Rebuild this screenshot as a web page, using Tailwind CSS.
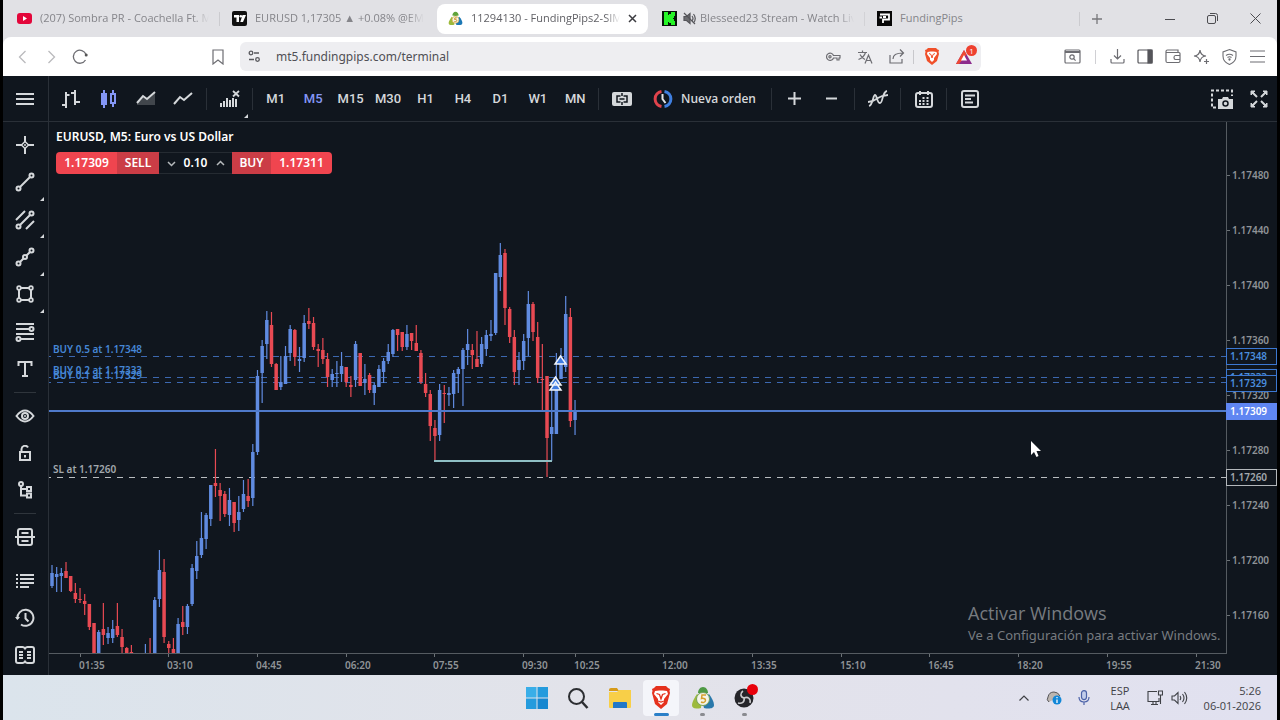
<!DOCTYPE html>
<html lang="es">
<head>
    <meta charset="UTF-8">
    <meta name="viewport" content="width=device-width, initial-scale=1.0">
    <title>11294130 - FundingPips2-SIM</title>
    <script src="https://cdn.jsdelivr.net/npm/@tailwindcss/browser@4"></script>
</head>

<body class="flex flex-col h-screen overflow-hidden bg-black px-[3px] font-['Open_Sans','Noto_Sans',sans-serif]">

    <!-- Tab strip -->
    <div class="flex h-[37px] shrink-0 items-center bg-[#e1e1e5] text-xs text-[#85858a]">
        <nav class="flex flex-1 items-center pl-px" aria-label="Tabs">
            <a href="#" class="flex h-[30px] max-w-[215px] flex-1 items-center gap-2 pl-[13px] pr-[10px] min-w-0">
                <svg class="w-[15px] h-[15px] shrink-0" viewBox="0 0 15 15"><rect y="2" width="15" height="11" rx="3" fill="#e3063a"/><path d="M6 5l4 2.500-4 2.500z" fill="#fff"/></svg>
                <span class="flex-1 overflow-hidden whitespace-nowrap text-[11px] mask-r-from-90%">(207) Sombra PR - Coachella Ft. M</span>
            </a>
            <a href="#" class="flex h-[14px] max-w-[215px] flex-1 items-center gap-2 pl-3 pr-[10px] min-w-0 border-l border-[#cbcbcf]">
                <svg class="w-[15px] h-[15px] shrink-0" viewBox="0 0 15 15"><rect width="15" height="15" rx="2" fill="#111"/><path d="M2 4h5v7H4.500V6.500H2zM10.500 4H14l-3 7H8.300z" fill="#fff"/><circle cx="8.800" cy="5.300" r="1.300" fill="#fff"/></svg>
                <span class="flex-1 overflow-hidden whitespace-nowrap text-[11px] mask-r-from-90%">EURUSD 1,17305 ▲ +0.08% @EMI</span>
            </a>
            <a href="#" aria-current="page" class="flex h-[30px] max-w-[215px] flex-1 min-w-0 pl-[3px] pr-px">
                <span class="flex flex-1 min-w-0 items-center gap-2 rounded-lg bg-white pl-[11px] pr-[11px] text-[#616166]">
                    <svg class="w-[15px] h-[15px] shrink-0" viewBox="0 0 24 24"><path d="M12 1c3 0 5 3 5 6l-5 1-5-1c0-3 2-6 5-6z" fill="#5fa33a"/><path d="M6 9l5 4-1 9c-4 1-9 1-9-3 0-3 3-7 5-10z" fill="#9db93a"/><path d="M18 9c3 3 5 7 5 10 0 4-6 4-10 3l-2-8z" fill="#1c78b5"/><circle cx="12" cy="14" r="5.500" fill="#f7f4e6" stroke="#d0a23c"/><path d="M14 11h-3l-.5 2.500c3 0 4 .5 3.500 2.500-.5 1-2 1.500-4 1" fill="none" stroke="#c98b1e" stroke-width="1.500"/></svg>
                    <span class="flex-1 overflow-hidden whitespace-nowrap text-[11px] mask-r-from-90%">11294130 - FundingPips2-SIM</span>
                    <svg class="w-[9px] h-[9px] shrink-0" viewBox="0 0 9 9" stroke="#3c3c40" stroke-width="1.500"><path d="M1 1l7 7M8 1L1 8"/></svg>
                </span>
            </a>
            <a href="#" class="flex h-[30px] max-w-[215px] flex-1 items-center pl-[13px] pr-[10px] min-w-0">
                <svg class="w-[15px] h-[15px] shrink-0" viewBox="0 0 15 15"><rect width="15" height="15" fill="#08140a"/><path d="M2 1h4v3h1V3h2V1h4v4h-1v2h-1v1h1v2h1v4H9v-2H7v-1H6v3H2z" fill="#27f528"/></svg>
                <svg class="ml-[6px] mr-1 w-[13px] h-[13px] shrink-0" viewBox="0 0 13 13" fill="none" stroke="#55555a" stroke-width="1.200"><path d="M1 4.500h2.500L7 1.500v10L3.500 8.500H1z" fill="#6c6c70"/><path d="M9 4q2 2.500 0 5M10.500 2q3.500 4.500 0 9M1 1l11 11"/></svg>
                <span class="flex-1 overflow-hidden whitespace-nowrap text-[11px] mask-r-from-90%">Blesseed23 Stream - Watch Liv</span>
            </a>
            <a href="#" class="flex h-[14px] max-w-[215px] flex-1 items-center gap-2 pl-3 min-w-0 border-l border-[#d2d2d6]">
                <svg class="w-[15px] h-[15px] shrink-0" viewBox="0 0 15 15"><rect width="15" height="15" fill="#080808"/><path d="M3 3.500h9v5H6V12M6 6h3M2.500 6.500H5" fill="none" stroke="#fff" stroke-width="1.800"/></svg>
                <span class="whitespace-nowrap text-[11px]">FundingPips</span>
            </a>
            <button aria-label="Nueva pestaña" class="flex h-[14px] w-[35px] items-center justify-center border-l border-[#cbcbcf]">
                <svg class="w-[10px] h-[10px]" viewBox="0 0 10 10" stroke="#77777b" stroke-width="1.300"><path d="M5 0v10M0 5h10"/></svg>
            </button>
        </nav>
        <div class="flex items-center">
            <button aria-label="Minimizar" class="flex w-[43px] justify-center"><svg class="w-[10px] h-[10px]" viewBox="0 0 10 10" stroke="#4c4c50"><path d="M0 5.500h10"/></svg></button>
            <button aria-label="Restaurar" class="flex w-[43px] justify-center"><svg class="w-[11px] h-[11px]" viewBox="0 0 11 11" fill="none" stroke="#4c4c50"><rect x=".5" y="2.500" width="8" height="8" rx="1.500"/><path d="M3 .500h5.500a2 2 0 0 1 2 2V8"/></svg></button>
            <button aria-label="Cerrar" class="flex w-[43px] justify-center"><svg class="w-[11px] h-[11px]" viewBox="0 0 11 11" stroke="#4c4c50"><path d="M.5.500l10 10M10.500.500l-10 10"/></svg></button>
        </div>
    </div>

    <!-- Address bar -->
    <div class="shrink-0 bg-[#e1e1e5]">
        <div class="flex h-[39px] items-center rounded-t-lg bg-white text-[#6d6d72]">
            <div class="flex w-[237px] items-center">
                <button aria-label="Atrás" class="flex w-[40px] justify-center"><svg class="w-[14px] h-[14px]" viewBox="0 0 14 14" fill="none" stroke="#bababd" stroke-width="1.300"><path d="M9.500 1l-6 6 6 6"/></svg></button>
                <button aria-label="Adelante" class="flex w-[16px] justify-center"><svg class="w-[14px] h-[14px]" viewBox="0 0 14 14" fill="none" stroke="#bababd" stroke-width="1.300"><path d="M4.500 1l6 6-6 6"/></svg></button>
                <button aria-label="Recargar" class="flex w-[41px] justify-center"><svg class="w-4 h-4" viewBox="0 0 16 16" fill="none" stroke="#6d6d72" stroke-width="1.300"><path d="M13.500 11A6.500 6.500 0 1 1 14 5.500"/><circle cx="14.200" cy="6" r="1.500" fill="#555" stroke="none"/></svg></button>
                <span class="flex-1"></span>
                <button aria-label="Marcador" class="flex w-11 justify-center"><svg class="w-[14px] h-4" viewBox="0 0 14 16" fill="none" stroke="currentColor" stroke-width="1.200"><path d="M2 1h10v14l-5-4-5 4z"/></svg></button>
            </div>
            <div class="flex h-[29px] flex-1 items-center rounded-md bg-[#eeeef1] pl-2">
                <svg class="w-[13px] h-[13px]" viewBox="0 0 13 13" fill="none" stroke="#59595e" stroke-width="1.300"><circle cx="3" cy="3" r="1.800"/><path d="M6 3h5M1 9.500h5"/><circle cx="9.500" cy="9.500" r="1.800"/></svg>
                <input aria-label="Dirección" value="mt5.fundingpips.com/terminal" class="ml-[15px] min-w-0 flex-1 bg-transparent font-['Noto_Sans',sans-serif] text-xs text-[#505055] outline-none">
                <button aria-label="Contraseña" class="flex w-8 justify-center"><svg class="w-[15px] h-[10px]" viewBox="0 0 15 10" fill="none" stroke="currentColor" stroke-width="1.200"><path d="M7.500 3.500H14v2.500h-1v2h-2V6H7.500A3.600 3.600 0 1 1 7.500 3.500z"/><circle cx="4" cy="4.800" r="1.100"/></svg></button>
                <button aria-label="Traducir" class="flex w-8 justify-center"><svg class="w-[15px] h-[14px]" viewBox="0 0 15 14" fill="none" stroke="currentColor" stroke-width="1.200"><path d="M0 2.500h9M4.500.500v2M7.500 2.500C6.500 6 3 8.500.5 9.500M2 4.500c1 2 3 4 5 5M7 13.500l3.500-8.500L14 13.500M8.200 10.500h4.700"/></svg></button>
                <button aria-label="Compartir" class="flex w-8 justify-center"><svg class="w-4 h-[15px]" viewBox="0 0 16 15" fill="none" stroke="currentColor" stroke-width="1.200"><path d="M1 6v8h12v-4M4 10c0-4 3-6 10-6M11 .500L14.500 4 11 7.500"/></svg></button>
                <span class="h-[14px] w-px bg-[#c8c8cc]"></span>
                <button aria-label="Brave Shields" class="flex w-9 justify-center"><svg class="w-4 h-[17px]" viewBox="0 0 16 17"><path d="M4 0h8l1.500 1.500L15 2l-.5 2L15 6l-2 7-5 4-5-4-2-7 .5-2L1 2l1.500-.500z" fill="#f0502a"/><path d="M3.500 4l3-.5h3l3 .5.500 2-3 4v2L8 14l-2-2v-2L3 6z" fill="#fff"/><path d="M5 5.500l2 1L8 10l1-3.500 2-1" fill="none" stroke="#f0502a"/></svg></button>
                <button aria-label="Brave Rewards" class="relative flex w-7 justify-center mr-[3px]"><svg class="w-4 h-[14px]" viewBox="0 0 16 14"><path d="M8 0l8 14H0z" fill="#8d2c8d"/><path d="M8 0l2.500 4.500L3 14H0z" fill="#ee4a34"/><path d="M8 5l3 5.500H5z" fill="#fff"/></svg><span class="absolute -top-[5px] left-4 h-[11px] w-[11px] rounded-full bg-[#ee402f] text-center text-[8px] leading-[11px] text-white">1</span></button>
            </div>
            <div class="flex w-[296px] items-center justify-end">
                <button aria-label="Buscar pestañas" class="flex w-[31px] justify-center"><svg class="w-[17px] h-[15px]" viewBox="0 0 17 15" fill="none" stroke="currentColor" stroke-width="1.200"><rect x="1" y="1" width="15" height="13" rx="1"/><path d="M1 3h15" stroke-width="2"/><circle cx="8" cy="8" r="2.200"/><path d="M9.600 9.600l2 2"/></svg></button>
                <span class="mx-[7px] h-[14px] w-px bg-[#d0d0d4]"></span>
                <button aria-label="Descargas" class="flex w-7 justify-center"><svg class="w-[15px] h-[15px]" viewBox="0 0 15 15" fill="none" stroke="currentColor" stroke-width="1.200"><path d="M7.500 0v10M4 6.500L7.500 10 11 6.500M1 10v3q0 1 1 1h11q1 0 1-1v-3"/></svg></button>
                <button aria-label="Barra lateral" class="flex w-7 justify-center"><svg class="w-4 h-[15px]" viewBox="0 0 16 15" fill="none" stroke="#55555a" stroke-width="1.200"><rect x="1" y="1" width="14" height="13" rx="1"/><path d="M11 1h4v13h-4z" fill="#55555a"/></svg></button>
                <button aria-label="Cartera" class="flex w-7 justify-center"><svg class="w-4 h-[15px]" viewBox="0 0 16 15" fill="none" stroke="currentColor" stroke-width="1.200"><path d="M1 4V2.500Q1 1 2.500 1H13v3M1 3.500h13q1 0 1 1V12q0 1.500-1.500 1.500h-11Q1 13.500 1 12z M15 6.500h-4.500q-1.500 0-1.500 2t1.500 2H15"/></svg></button>
                <button aria-label="Leo AI" class="flex w-7 justify-center"><svg class="w-4 h-4" viewBox="0 0 16 16" fill="none" stroke="currentColor" stroke-width="1.200"><path d="M7 1q.5 5.500 6 6-5.500.5-6 6-.5-5.500-6-6 5.500-.5 6-6zM13.500 10v5M11 12.500h5"/></svg></button>
                <button aria-label="VPN" class="flex w-7 justify-center"><svg class="w-[15px] h-4" viewBox="0 0 15 16" fill="none" stroke="currentColor" stroke-width="1.100"><path d="M7.500.600L14 3v4q0 6-6.500 8.500Q1 13 1 7V3zM4 6.500q3.500-2.500 7 0M5.500 8.500q2-1.500 4 0"/><circle cx="7.500" cy="10.500" r=".6"/></svg></button>
                <button aria-label="Menú" class="mr-[6px] flex w-7 justify-center"><svg class="w-[15px] h-[13px]" viewBox="0 0 15 13" stroke="currentColor" stroke-width="1.200"><path d="M0 1h15M0 6.500h15M0 12h15"/></svg></button>
            </div>
        </div>
    </div>

    <!-- Trading terminal -->
    <div class="flex min-h-0 flex-1 flex-col bg-[#10161e] text-[#d5d8db]">
        <header class="flex h-[46px] shrink-0 items-center border-b border-[#2a3038]">
            <button aria-label="Menú principal" class="flex h-full w-[46px] items-center justify-center border-r border-[#2a3038] pr-px">
                <svg class="w-[18px] h-[14px]" viewBox="0 0 18 14" stroke="currentColor" stroke-width="2"><path d="M0 2h18M0 7h18M0 12h18"/></svg>
            </button>
            <div class="ml-[3px] grid w-[150px] grid-cols-4 justify-items-center">
                <button aria-label="Barras"><svg class="w-5 h-5" viewBox="0 0 20 20" fill="none" stroke="currentColor" stroke-width="2"><path d="M5 3v16M5 6h3.500M1 16h4M14 1v15M10 4h4M14 13h5"/></svg></button>
                <button aria-label="Velas"><svg class="w-5 h-5" viewBox="0 0 20 20" fill="none" stroke="#8496f5" stroke-width="2"><path d="M6 1v18M15 1v4M15 14v4"/><rect x="4" y="5" width="4" height="10" fill="#8496f5"/><rect x="13" y="5" width="4" height="9"/></svg></button>
                <button aria-label="Área"><svg class="w-5 h-5" viewBox="0 0 20 20"><path d="M1 14l6-6 4 3 8-7v12H1z" fill="#41464c"/><path d="M1 14l6-7 4 3 8-7" fill="none" stroke="currentColor" stroke-width="2"/></svg></button>
                <button aria-label="Línea"><svg class="w-5 h-5" viewBox="0 0 20 20" fill="none" stroke="currentColor" stroke-width="2"><path d="M1 15l6-7 4 3 8-7"/></svg></button>
            </div>
            <span class="mx-1 h-[22px] w-px bg-[#2a3038]"></span>
            <button aria-label="Indicadores" class="relative flex h-full w-[37px] items-center justify-center">
                <svg class="w-5 h-5" viewBox="0 0 20 20" fill="none" stroke="currentColor" stroke-width="2"><path d="M1 18v-4M4 18v-6M7 18V9M10 18v-7M13 18V9M16 18v-8"/><path d="M13 2l6 5.500M19 2l-6 5.500" stroke-width="1.800"/></svg>
                <svg class="absolute bottom-[3px] right-0 w-1 h-1" viewBox="0 0 4 4"><path d="M4 0v4H0z" fill="currentColor"/></svg>
            </button>
            <span class="mx-1 h-[22px] w-px bg-[#2a3038]"></span>
            <div class="grid w-[337px] grid-cols-9 font-['Roboto',sans-serif] text-[13px] font-medium">
                <button>M1</button>
                <button class="text-[#8496f5]">M5</button>
                <button>M15</button>
                <button>M30</button>
                <button>H1</button>
                <button>H4</button>
                <button>D1</button>
                <button>W1</button>
                <button>MN</button>
            </div>
            <span class="mx-1 h-[22px] w-px bg-[#2a3038]"></span>
            <button aria-label="Trading con un clic" class="flex w-[37px] justify-center"><svg class="w-5 h-4" viewBox="0 0 20 16"><rect y="1" width="20" height="14" rx="2" fill="currentColor"/><path d="M8.500 5H5v6h3.500M11.500 5H15v6h-3.500M7.500 8h5M10 2v3M10 11v3" fill="none" stroke="#10161e" stroke-width="1.500"/></svg></button>
            <button class="flex w-[127px] items-center gap-2 whitespace-nowrap pl-[13px] text-xs font-semibold">
                <svg class="w-5 h-5 shrink-0" viewBox="0 0 20 20" fill="none" stroke-width="3"><path d="M8.500 2.500a7.600 7.600 0 0 0 0 15" stroke="#e0434c"/><path d="M11.500 2.500a7.600 7.600 0 0 1 0 15" stroke="#3f7fe0"/><path d="M9.500 5v5l3 4" stroke="#e4e6e8" stroke-width="2"/></svg>
                Nueva orden
            </button>
            <span class="mx-1 h-[22px] w-px bg-[#2a3038]"></span>
            <button aria-label="Acercar" class="flex w-[37px] justify-center"><svg class="w-[13px] h-[13px]" viewBox="0 0 13 13" stroke="currentColor" stroke-width="2"><path d="M6.500 0v13M0 6.500h13"/></svg></button>
            <button aria-label="Alejar" class="flex w-[37px] justify-center"><svg class="w-[11px] h-[13px]" viewBox="0 0 11 13" stroke="currentColor" stroke-width="2"><path d="M0 6.500h11"/></svg></button>
            <span class="mx-1 h-[22px] w-px bg-[#2a3038]"></span>
            <button aria-label="Señales" class="flex w-[37px] justify-center"><svg class="w-5 h-5" viewBox="0 0 20 20" fill="none" stroke="currentColor" stroke-width="1.800"><path d="M1 17c4-1 4-11 6-11s2 8 5 8 2-11 7-12M0 13l5-1 5-3 4-2 6-1"/></svg></button>
            <span class="mx-1 h-[22px] w-px bg-[#2a3038]"></span>
            <button aria-label="Calendario" class="flex w-[37px] justify-center"><svg class="w-[18px] h-[18px]" viewBox="0 0 18 18" fill="none" stroke="currentColor" stroke-width="2"><rect x="1" y="3" width="16" height="14" rx="2"/><path d="M5 1v4M13 1v4"/><path d="M7.500 8h2M11.500 8h2M4 11h2M7.500 11h2M11.500 11h2M4 14h2M7.500 14h2M11.500 14h2"/></svg></button>
            <span class="mx-1 h-[22px] w-px bg-[#2a3038]"></span>
            <button aria-label="Noticias" class="flex w-[37px] justify-center"><svg class="w-[18px] h-[18px]" viewBox="0 0 18 18" fill="none" stroke="currentColor" stroke-width="2"><rect x="1" y="1" width="16" height="16" rx="2"/><path d="M4 5.500h10M4 9h6M4 12.500h8"/></svg></button>
            <span class="flex-1"></span>
            <button aria-label="Captura" class="flex w-[37px] justify-center"><svg class="w-[22px] h-5" viewBox="0 0 22 20"><path d="M5 18.500H1V1.500h20V7" fill="none" stroke="currentColor" stroke-width="2" stroke-dasharray="3 2"/><path d="M7 10h4l1-2h5l1 2h4v10H7z" fill="currentColor"/><circle cx="14.500" cy="14.500" r="2.500" fill="none" stroke="#10161e" stroke-width="1.500"/></svg></button>
            <button aria-label="Pantalla completa" class="flex w-[37px] justify-center"><svg class="w-[18px] h-[18px]" viewBox="0 0 18 18" fill="currentColor" stroke="currentColor" stroke-width="2"><path d="M1 1h4L1 5zM17 1v4l-4-4zM1 17v-4l4 4zM17 17h-4l4-4z" stroke-width="1"/><path d="M2 2l5 5M16 2l-5 5M2 16l5-5M16 16l-5-5"/></svg></button>
        </header>

        <div class="flex min-h-0 flex-1">
            <!-- Drawing tools -->
            <aside class="flex w-[46px] shrink-0 flex-col border-r border-[#2a3038] pt-1 pr-px">
                <div class="grid h-[262px] grid-rows-7">
                    <button aria-label="Cursor" class="flex items-center justify-center"><svg class="w-5 h-5" viewBox="0 0 20 20" fill="none" stroke="currentColor" stroke-width="2"><path d="M10 1v6M10 13v6M1 10h6M13 10h6"/><path d="M10 6.500l3.500 3.500-3.500 3.500L6.500 10z" stroke-width="1.500"/><circle cx="10" cy="10" r="1" stroke="none" fill="currentColor"/></svg></button>
                    <button aria-label="Línea de tendencia" class="relative flex items-center justify-center"><svg class="w-5 h-5" viewBox="0 0 20 20" fill="none" stroke="currentColor" stroke-width="2"><circle cx="3.500" cy="16.500" r="2"/><circle cx="16.500" cy="3.500" r="2"/><path d="M5 15L15 5"/></svg><svg class="absolute bottom-0 right-[3px] w-1 h-1" viewBox="0 0 4 4"><path d="M4 0v4H0z" fill="currentColor"/></svg></button>
                    <button aria-label="Canal" class="relative flex items-center justify-center"><svg class="w-5 h-5" viewBox="0 0 20 20" fill="none" stroke="currentColor" stroke-width="2"><circle cx="3.500" cy="16.500" r="2"/><circle cx="16.500" cy="3.500" r="2"/><path d="M5 15L15 5M1 10l9-9M11 19l8-8"/></svg><svg class="absolute bottom-0 right-[3px] w-1 h-1" viewBox="0 0 4 4"><path d="M4 0v4H0z" fill="currentColor"/></svg></button>
                    <button aria-label="Elliott" class="relative flex items-center justify-center"><svg class="w-5 h-5" viewBox="0 0 20 20" fill="none" stroke="currentColor" stroke-width="2"><circle cx="3.500" cy="16.500" r="2"/><circle cx="10" cy="10" r="2"/><circle cx="16.500" cy="3.500" r="2"/><path d="M5 15l3.500-3.500M11.500 8.500L15 5"/></svg><svg class="absolute bottom-0 right-[3px] w-1 h-1" viewBox="0 0 4 4"><path d="M4 0v4H0z" fill="currentColor"/></svg></button>
                    <button aria-label="Figuras" class="relative flex items-center justify-center"><svg class="w-5 h-5" viewBox="0 0 20 20" fill="none" stroke="currentColor" stroke-width="2"><path d="M4 6v8M16 6v8M6 4h8M6 16h8"/><g stroke-width="1.800"><circle cx="4" cy="4" r="1.800"/><circle cx="16" cy="4" r="1.800"/><circle cx="4" cy="16" r="1.800"/><circle cx="16" cy="16" r="1.800"/></g></svg><svg class="absolute bottom-0 right-[3px] w-1 h-1" viewBox="0 0 4 4"><path d="M4 0v4H0z" fill="currentColor"/></svg></button>
                    <button aria-label="Fibonacci" class="flex items-center justify-center"><svg class="w-5 h-5" viewBox="0 0 20 20" fill="none" stroke="currentColor" stroke-width="2"><path d="M1 2h18M1 7h13M1 12h18M6 17h13"/><circle cx="16.500" cy="7" r="2"/><circle cx="3.500" cy="17" r="2"/></svg></button>
                    <button aria-label="Texto" class="flex items-center justify-center"><svg class="w-4 h-[18px]" viewBox="0 0 16 18" fill="none" stroke="currentColor" stroke-width="2"><path d="M1.500 6V2h13v4M8 2v14M5 16h6"/></svg></button>
                </div>
                <hr class="mx-auto my-1 w-[22px] border-[#2f353c]">
                <div class="grid h-[112px] grid-rows-3">
                    <button aria-label="Mostrar objetos" class="flex items-center justify-center"><svg class="w-5 h-4" viewBox="0 0 20 16" fill="none" stroke="currentColor" stroke-width="2"><path d="M1.500 8q8.500-11 17 0-8.500 11-17 0z"/><circle cx="10" cy="8" r="3"/><circle cx="10" cy="8" r="1" fill="currentColor" stroke="none"/></svg></button>
                    <button aria-label="Bloquear objetos" class="flex items-center justify-center"><svg class="w-[14px] h-4" viewBox="0 0 14 16" fill="none" stroke="currentColor" stroke-width="2"><rect x="2" y="7" width="10" height="8"/><path d="M3.500 7V4a3.500 3.500 0 0 1 6.500-1.500M7 10v2.500"/></svg></button>
                    <button aria-label="Lista de objetos" class="flex items-center justify-center"><svg class="w-4 h-[18px]" viewBox="0 0 16 18" fill="none" stroke="currentColor" stroke-width="2"><circle cx="4" cy="3" r="2"/><path d="M4 5v9.500h6M4 8h6"/><rect x="10" y="6" width="4" height="4"/><rect x="10" y="12.500" width="4" height="4"/></svg></button>
                </div>
                <hr class="mx-auto my-1 w-[22px] border-[#2f353c]">
                <button aria-label="Ticket" class="flex h-[37px] items-center justify-center"><svg class="w-5 h-5" viewBox="0 0 20 20" fill="none" stroke="currentColor" stroke-width="2"><rect x="3" y="2" width="14" height="16" rx="2"/><path d="M0 10h20M6.500 6h7M6.500 14h7"/></svg></button>
                <div class="mt-[7px] grid h-[112px] grid-rows-3">
                    <button aria-label="Observación del mercado" class="flex items-center justify-center"><svg class="w-[18px] h-[14px]" viewBox="0 0 18 14" stroke="currentColor" stroke-width="2"><path d="M0 1h2M0 5h2M0 9h2M0 13h2M4 1h14M4 5h14M4 9h14M4 13h9"/></svg></button>
                    <button aria-label="Historial" class="flex items-center justify-center"><svg class="w-5 h-5" viewBox="0 0 20 20" fill="none" stroke="currentColor" stroke-width="2"><path d="M2.500 11A8 8 0 1 1 6 16.500M10.500 5v5.500l3 3"/><path d="M0 9h5l-2.500 3z" fill="currentColor" stroke="none"/></svg></button>
                    <button aria-label="Profundidad" class="flex items-center justify-center"><svg class="w-5 h-[18px]" viewBox="0 0 20 18" fill="none" stroke="currentColor" stroke-width="2"><path d="M10 2.500Q9 1 7.500 1H3Q1 1 1 3v12q0 2 2 2h4.500Q9 17 10 15.500q1 1.500 2.500 1.500H17q2 0 2-2V3q0-2-2-2h-4.500Q11 1 10 2.500zM4 6h4M4 9h4M4 12h4M12 6h4M12 9h4M12 12h4"/></svg></button>
                </div>
            </aside>

            <!-- Chart -->
            <main class="relative grid min-w-0 flex-1 grid-cols-[1fr_51px] grid-rows-[1fr_22px] font-['Noto_Sans',sans-serif]">
                <svg class="h-full w-full overflow-hidden" id="plot">
                    <g transform="translate(-49 -122)" fill="none">
                        <g stroke="#3c68b0" stroke-dasharray="6 6" stroke-dashoffset="4">
                            <path d="M49 356.500h4000M49 377.500h4000M49 382.500h4000"/>
                        </g>
                        <path d="M49 477.500h4000" stroke="#b9bdc0" stroke-dasharray="6 6" stroke-dashoffset="4"/>
                        <g id="candles"></g>
                        <path d="M49 411h4000" stroke="#4f7acb" stroke-width="2"/>
                        <path d="M434 461h118" stroke="#8fbfc4" stroke-width="2"/>
                        <g fill="#3f7be0" stroke="#f2f5fa" stroke-width="1.500">
                            <path d="M560.500 356l5.500 8h-11zM555.500 377l5.500 8h-11zM555.500 382l5.500 8h-11z"/>
                        </g>
                        <g class="text-[10px] font-semibold" fill="#4687d6">
                            <text x="53" y="353">BUY 0.5 at 1.17348</text>
                            <text x="53" y="374">BUY 0.2 at 1.17333</text>
                            <text x="53" y="379">BUY 0.1 at 1.17329</text>
                            <text x="53" y="473" fill="#a2a8ad">SL at 1.17260</text>
                        </g>
                    </g>
                </svg>
                <svg class="h-full w-full overflow-hidden text-[10px] font-semibold" id="prices">
                    <path d="M.5 0v4000" stroke="#555b61"/>
                </svg>
                <svg class="col-span-2 h-full w-full text-[10px] font-semibold" id="times">
                    <path d="M0 .500h1178" stroke="#555b61"/>
                </svg>

                <!-- One click trading panel -->
                <div class="absolute left-[7px] top-[7px] font-semibold text-white">
                    <h1 class="text-xs leading-4">EURUSD, M5: Euro vs US Dollar</h1>
                    <div class="mt-[7px] flex h-[22px] items-center text-xs">
                        <button class="flex h-full items-center rounded-l-sm bg-[#f0454f]"><span class="w-[61px]">1.17309</span><span class="flex h-full w-[42px] items-center justify-center bg-[#cb3d46]">SELL</span></button>
                        <div class="flex h-full w-[73px] items-center justify-center gap-1 border-y border-[#252b32]">
                            <button aria-label="Menos"><svg class="w-[9px] h-[9px]" viewBox="0 0 9 9" fill="none" stroke="#b6babd" stroke-width="1.500"><path d="M1 3l3.500 3.500L8 3"/></svg></button>
                            <input aria-label="Volumen" value="0.10" class="w-8 bg-transparent text-center outline-none">
                            <button aria-label="Más"><svg class="w-[9px] h-[9px]" viewBox="0 0 9 9" fill="none" stroke="#b6babd" stroke-width="1.500"><path d="M1 6l3.500-3.500L8 6"/></svg></button>
                        </div>
                        <button class="flex h-full items-center rounded-r-sm bg-[#f0454f]"><span class="flex h-full w-[39px] items-center justify-center bg-[#cb3d46]">BUY</span><span class="w-[61px]">1.17311</span></button>
                    </div>
                </div>

                <div class="absolute bottom-[30px] right-[51px] w-[258px] whitespace-nowrap text-[#777b80]">
                    <p class="font-['Open_Sans',sans-serif] text-lg leading-6">Activar Windows</p>
                    <p class="text-[13px] leading-5">Ve a Configuración para activar Windows.</p>
                </div>

                <svg class="absolute left-[981px] top-[318px] w-3 h-[18px]" viewBox="0 0 12 18"><path d="M1 1v14l3-3 2.500 5 2-1L6.500 11H11z" fill="#fff"/></svg>
            </main>
        </div>
    </div>

    <!-- Taskbar -->
    <footer class="grid h-[45px] shrink-0 grid-cols-[1fr_auto_1fr] items-center bg-linear-to-r from-[#dbe4ec] via-[#e3e3ea] to-[#e1e1f0] text-[#3f4146]">
        <span></span>
        <div class="grid h-full w-[250px] grid-cols-6 items-center justify-items-center pl-px">
            <button aria-label="Inicio"><svg class="w-[22px] h-[22px]" viewBox="0 0 22 22" fill="#1687d0"><path d="M0 0h10.500v10.500H0z" fill="#39aee8"/><path d="M11.500 0H22v10.500H11.500zM0 11.500h10.500V22H0z" fill="#249bdd"/><path d="M11.500 11.500H22V22H11.500z"/></svg></button>
            <button aria-label="Buscar"><svg class="w-[22px] h-[22px]" viewBox="0 0 22 22" fill="none" stroke="#2c2e32" stroke-width="2"><circle cx="9.500" cy="9.500" r="7.500"/><path d="M15 15l5.500 6" stroke-width="2.500"/></svg></button>
            <button aria-label="Explorador"><svg class="w-6 h-[22px]" viewBox="0 0 24 22"><path d="M1 3q0-2 2-2h6l2 3H1z" fill="#d69a18"/><path d="M1 5h8l2-2h12v17q0 1-1 1H2q-1 0-1-1z" fill="#f8cf48"/><path d="M5 21v-5q0-1 1-1h12q1 0 1 1v5z" fill="#2278c8"/></svg></button>
            <button aria-label="Brave" class="relative flex h-9 w-9 items-center justify-center rounded bg-[#f4f5fa]"><svg class="w-5 h-[23px]" viewBox="0 0 20 23"><path d="M5 0h10l2 2 2 1-.5 2 .5 2-3 11-6 5-6-5L1 7l.5-2L1 3l2-1z" fill="#e5321e"/><path d="M4 5l4-.500h4l4 .500 1 3-4 5v3l-3 3-3-3v-3L3 8z" fill="#fff"/><path d="M5.500 7.500l3 1L10 13l1.500-4.500 3-1M7 15l3 1 3-1" fill="none" stroke="#e5321e" stroke-width="1.300"/></svg><span class="absolute bottom-0 h-[3px] w-[15px] rounded-full bg-[#2a7fc8]"></span></button>
            <button aria-label="MetaTrader 5" class="relative flex h-9 w-9 items-center justify-center"><svg class="w-6 h-6" viewBox="0 0 24 24"><path d="M12 1c3 0 5 3 5 6l-5 1-5-1c0-3 2-6 5-6z" fill="#4f9a45"/><path d="M6 8l5 4-1 10c-4 1-9 1-9-3 0-3 3-8 5-11z" fill="#9dba3d"/><path d="M18 8c3 4 5 8 5 11 0 4-6 4-10 3l-2-8z" fill="#2a79ab"/><circle cx="12" cy="13" r="6.500" fill="#f5f4ea" stroke="#76a25a"/><path d="M15 9h-4l-.5 3.500c3-.5 4 .5 4 2-.2 2-2.500 2.500-4.500 1.500" fill="none" stroke="#d5a02c" stroke-width="1.500"/></svg><span class="absolute bottom-0 h-[3px] w-[5px] rounded-full bg-[#8a8b90]"></span></button>
            <button aria-label="OBS" class="relative flex h-9 w-9 items-center justify-center"><svg class="w-5 h-5" viewBox="0 0 20 20"><circle cx="10" cy="10" r="9.500" fill="#25252a"/><path d="M10 10c-4-1-4-5-1-7M10 10c4-2 7 1 6 5M10 10c1 4-2 6-6 5" fill="none" stroke="#c9c9cc" stroke-width="1.600"/></svg><span class="absolute right-1 top-1 h-[11px] w-[11px] rounded-full bg-[#e8000b]"></span><span class="absolute bottom-0 h-[3px] w-[5px] rounded-full bg-[#8a8b90]"></span></button>
        </div>
        <div class="flex items-center justify-end pr-4 text-[11px] leading-[15px]">
            <button aria-label="Iconos ocultos" class="flex w-[30px] justify-center"><svg class="w-[10px] h-[10px]" viewBox="0 0 10 10" fill="none" stroke="currentColor" stroke-width="1.200"><path d="M.5 7.500L5 3l4.500 4.500"/></svg></button>
            <button aria-label="OneDrive" class="flex w-[30px] justify-center"><svg class="w-4 h-[14px]" viewBox="0 0 16 14"><path d="M3 11Q0 9 2 6q1-5 6-5 4 0 6 4" fill="#bcb5af" stroke="#57575b"/><circle cx="11" cy="9" r="4.500" fill="#1287d8"/><path d="M11 8.500V12M11 6v1.300" stroke="#fff" stroke-width="1.300"/></svg></button>
            <button aria-label="Micrófono" class="flex w-[30px] justify-center"><svg class="w-3 h-[15px]" viewBox="0 0 12 15" fill="none" stroke="#4b62a8" stroke-width="1.200"><rect x="3.500" y=".6" width="5" height="9" rx="2.500" fill="#c2cdea"/><path d="M1 7q0 5 5 5t5-5M6 12v3"/></svg></button>
            <button class="w-[42px] text-center">ESP<br>LAA</button>
            <button aria-label="Red y sonido" class="flex w-[52px] items-center justify-center gap-2">
                <svg class="w-4 h-4" viewBox="0 0 16 16" fill="none" stroke="currentColor" stroke-width="1.100"><path d="M10 1.500H1v10h11V8M4 14.500h7M6 11.500v3M9 11.500v3"/><path d="M11.500 1h4v4h-4zM13.500 5v9"/></svg>
                <svg class="w-[17px] h-[14px]" viewBox="0 0 17 14" fill="none" stroke="currentColor" stroke-width="1.100"><path d="M1 5h2.500L7 1.500v11L3.500 9H1zM9 5q1.500 2 0 4M11.500 3q3 4 0 8M13.500 1q4.500 6 0 12"/></svg>
            </button>
            <button class="w-[68px] whitespace-nowrap text-right">5:26<br>06-01-2026</button>
        </div>
    </footer>

    <script>
        const NS = 'http://www.w3.org/2000/svg';

        function add(parent, tag, attrs, text) {
            const el = document.createElementNS(NS, tag);
            for (const k in attrs) el.setAttribute(k, attrs[k]);
            if (text) el.textContent = text;
            parent.appendChild(el);
            return el;
        }

        // each candle: direction, high, body top, body bottom, low
        const candles = `
            B 565 573 586 588|B 567 574 577 592|B 568 573 576 592|R 562 571 578 578|R 576 576 591 592|R 583 593 599 603
            R 588 599 600 603|R 594 601 604 615|R 604 604 627 630|R 623 623 653 653|B 630 632 653 653|R 603 629 635 645
            B 627 633 638 644|B 620 629 638 643|R 603 626 635 637|R 629 637 647 653|R 647 648 653 653|R 645 652 653 653
            -|-|B 644 653 653 653|R 638 653 653 653|B 597 600 653 653|B 550 570 599 607
            R 559 572 637 643|R 641 644 648 653|R 638 649 653 653|B 618 624 653 653|R 606 622 627 635|B 604 606 627 634
            B 564 568 604 606|B 541 556 571 579|B 512 538 555 558|B 513 515 539 549|B 485 485 519 526|R 449 483 486 497
            R 483 490 496 521|R 491 494 514 517|B 488 500 515 526|R 502 502 523 532|B 496 512 520 531|B 480 494 509 512
            R 479 496 501 507|B 444 452 498 506|B 370 376 452 455|B 340 346 373 403|B 311 320 344 359|R 312 325 364 367
            R 363 364 390 390|B 356 382 387 390|B 346 356 384 384|B 325 329 353 361|R 329 330 357 366|B 347 359 361 372
            B 315 323 358 362|R 308 321 324 329|R 317 323 347 350|R 344 349 351 367|R 338 350 359 364|R 353 359 377 387
            B 369 374 380 387|B 361 373 374 387|B 352 366 374 382|R 367 367 382 387|R 376 385 387 397|B 341 344 380 387
            R 353 353 386 386|B 364 379 383 395|R 373 375 390 393|B 383 385 393 405|B 365 369 387 387|B 358 361 372 383
            B 344 352 361 364|B 329 330 354 357|R 329 329 335 351|R 332 332 347 351|B 325 334 347 350|R 333 333 341 350
            R 325 343 351 351|R 350 353 382 384|R 373 384 393 397|R 390 394 426 441|R 420 428 436 462|B 384 390 435 441
            R 385 393 394 423|B 387 393 395 406|B 370 373 394 408|B 367 369 374 393|B 348 350 369 406|B 329 344 350 365
            R 344 350 355 369|R 331 359 367 367|B 337 344 364 367|B 330 335 349 356|B 320 334 336 341|B 273 273 333 335
            B 243 255 277 291|R 249 253 308 325|R 307 309 337 343|R 330 337 372 385|B 352 360 370 385|B 334 341 361 370
            B 291 304 338 356|R 302 304 332 341|R 322 337 378 383|R 344 379 380 411|R 376 376 438 477|B 387 427 434 461
            B 353 385 434 434|B 348 363 379 379|B 296 314 367 372|R 308 317 421 427|B 400 411 420 435`.trim().split(/\s*[|\n]\s*/);

        const group = document.getElementById('candles');
        candles.forEach((row, i) => {
            if (row === '-') return;
            const [dir, high, top, bottom, low] = row.split(' ');
            const fill = dir === 'B' ? '#608be0' : '#e84a53';
            const x = 52 + i * 4.67;
            add(group, 'rect', { x: x - 0.6, y: high, width: 1.2, height: low - high, fill });
            add(group, 'rect', { x: x - 1.75, y: top, width: 3.5, height: Math.max(bottom - top, 1), fill });
        });

        // price scale
        const prices = document.getElementById('prices');
        for (let i = 0; i < 9; i++) {
            const y = 53 + i * 55;
            add(prices, 'path', { d: `M1 ${y}.5h3`, stroke: '#6c7277' });
            add(prices, 'text', { x: 6, y: y + 4, fill: '#8f9397' }, '1.' + (17480 - i * 40));
        }
        const tags = [
            [255, '1.17333', '#10161e', '#3c78d2', '#4a8ddc'],
            [234, '1.17348', '#10161e', '#3c78d2', '#4a8ddc'],
            [261, '1.17329', '#10161e', '#3c78d2', '#4a8ddc'],
            [289, '1.17309', '#5f86f2', '#5f86f2', '#ffffff'],
            [355, '1.17260', '#10161e', '#b4b8bc', '#a2a8ad']
        ];
        tags.forEach(([y, label, fill, stroke, color]) => {
            add(prices, 'rect', { x: 0.5, y: y - 7.5, width: 50, height: 16, fill, stroke });
            add(prices, 'text', { x: 4, y: y + 4, fill: color }, label);
        });

        // time scale
        const times = document.getElementById('times');
        [[31, '01:35'], [119, '03:10'], [208, '04:45'], [297, '06:20'], [385, '07:55'], [474, '09:30'], [526, '10:25'],
         [614, '12:00'], [703, '13:35'], [792, '15:10'], [880, '16:45'], [969, '18:20'], [1058, '19:55'], [1147, '21:30']].forEach(([x, label]) => {
            add(times, 'path', { d: `M${x}.5 1v3`, stroke: '#6c7277' });
            add(times, 'text', { x: x - 1, y: 16, fill: '#8f9397' }, label);
        });
    </script>
</body>
</html>
